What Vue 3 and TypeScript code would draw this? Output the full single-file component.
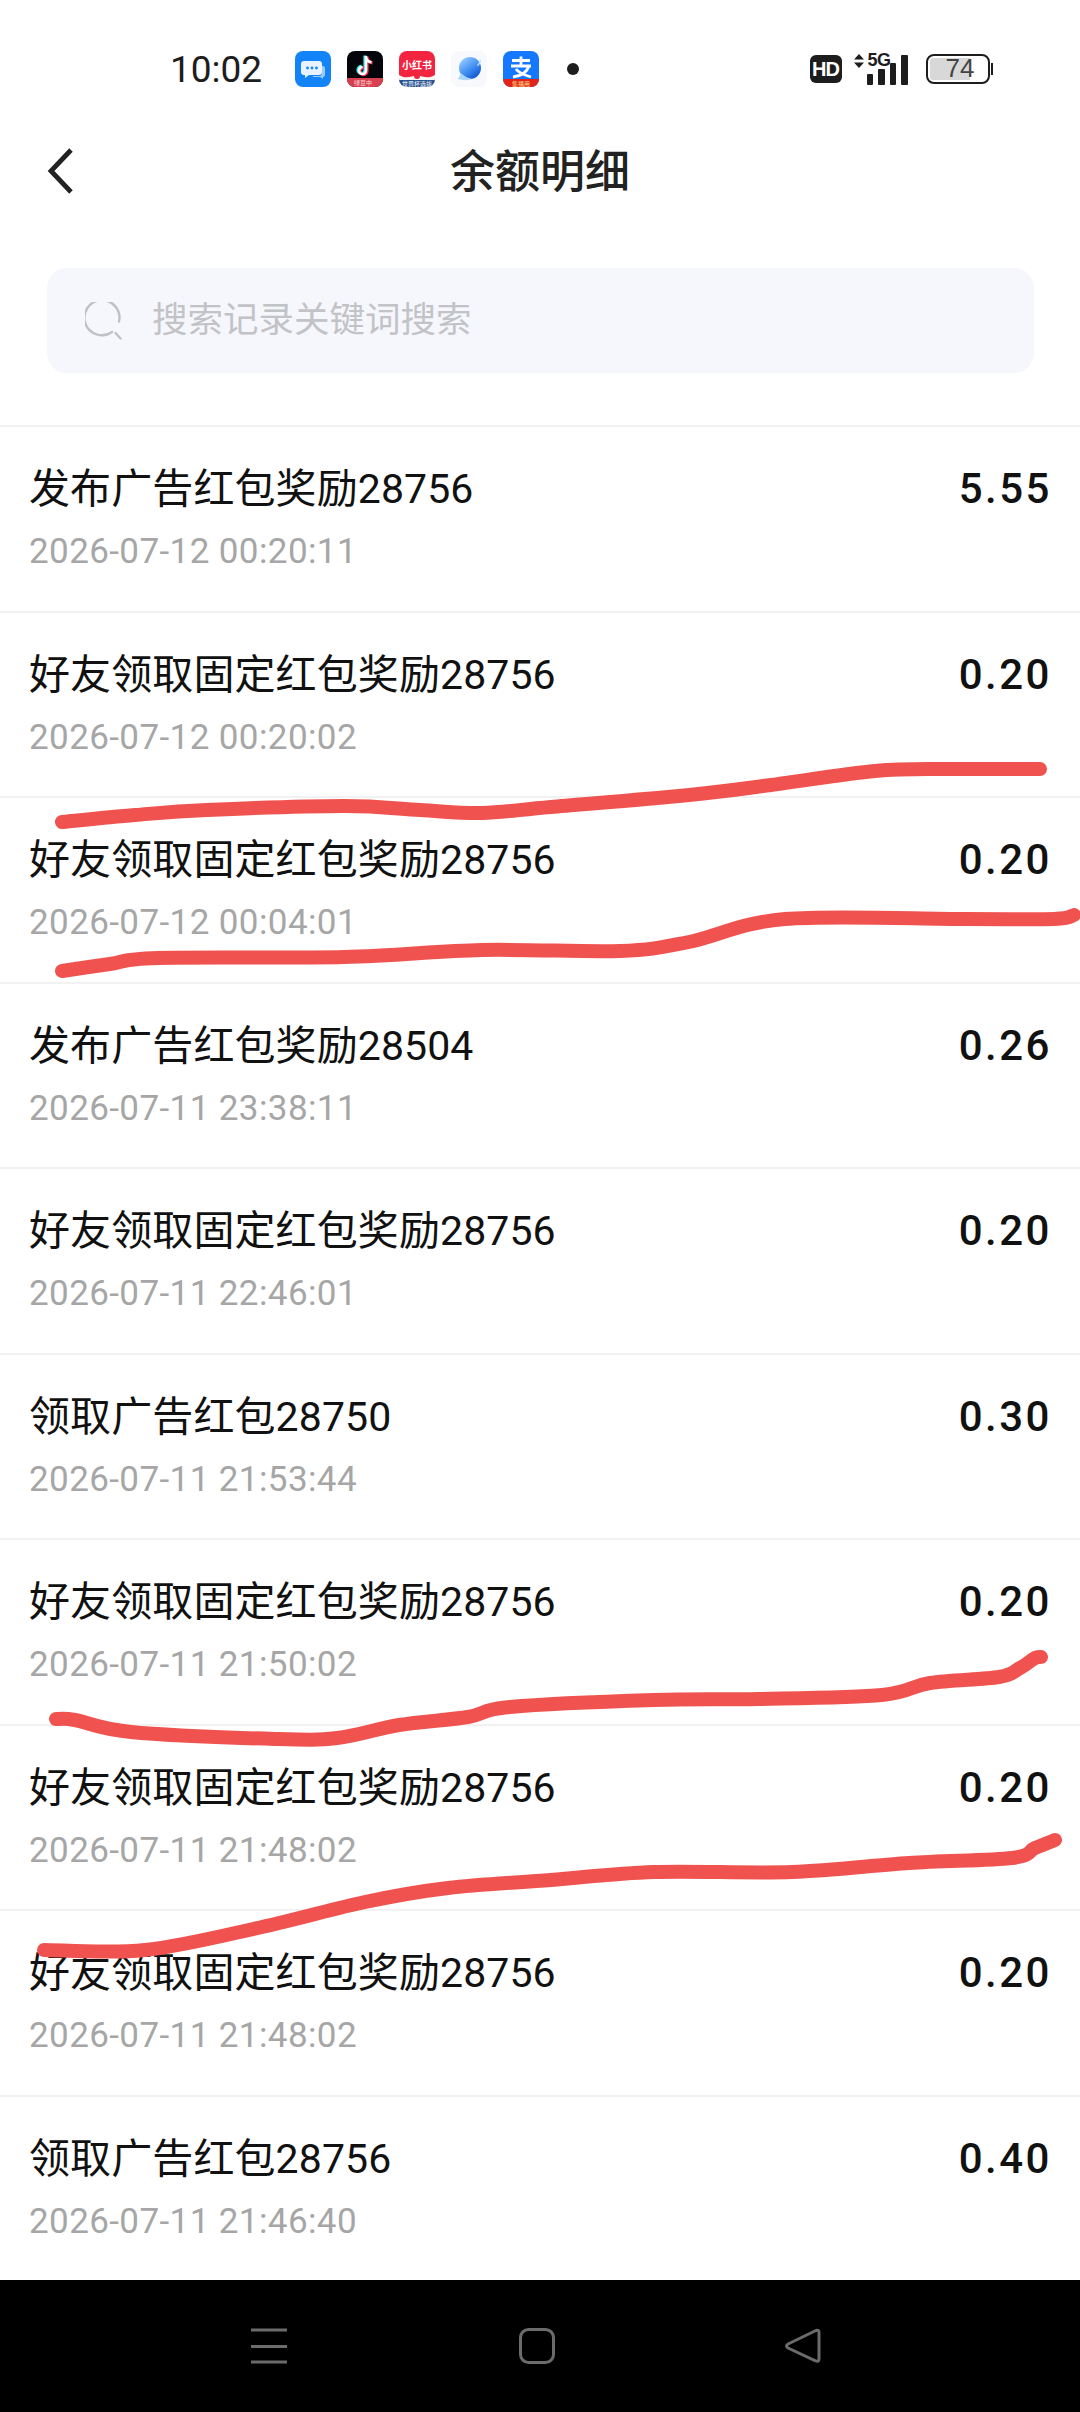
<script setup lang="ts">
interface Row { name: string; code: string; time: string; amount: string }
const rows: Row[] = [
  { name: '发布广告红包奖励', code: '28756', time: '2026-07-12 00:20:11', amount: '5.55' },
  { name: '好友领取固定红包奖励', code: '28756', time: '2026-07-12 00:20:02', amount: '0.20' },
  { name: '好友领取固定红包奖励', code: '28756', time: '2026-07-12 00:04:01', amount: '0.20' },
  { name: '发布广告红包奖励', code: '28504', time: '2026-07-11 23:38:11', amount: '0.26' },
  { name: '好友领取固定红包奖励', code: '28756', time: '2026-07-11 22:46:01', amount: '0.20' },
  { name: '领取广告红包', code: '28750', time: '2026-07-11 21:53:44', amount: '0.30' },
  { name: '好友领取固定红包奖励', code: '28756', time: '2026-07-11 21:50:02', amount: '0.20' },
  { name: '好友领取固定红包奖励', code: '28756', time: '2026-07-11 21:48:02', amount: '0.20' },
  { name: '好友领取固定红包奖励', code: '28756', time: '2026-07-11 21:48:02', amount: '0.20' },
  { name: '领取广告红包', code: '28756', time: '2026-07-11 21:46:40', amount: '0.40' },
]

const strokes: number[][][] = [
  [[62,822],[135,815],[207,810],[344,806],[420,810],[482,813],[551,807],[689,795],[771,785],[875,771],[950,769],[1040,769]],
  [[62,971],[110,964],[158,958],[344,957],[482,950],[620,951],[689,942],[785,919],[964,919],[1054,919],[1074,915]],
  [[56,1719],[75,1720],[131,1732],[275,1739],[337,1738],[399,1725],[468,1717],[510,1707],[654,1700],[758,1699],[882,1695],[930,1683],[999,1677],[1020,1668],[1035,1658],[1041,1657]],
  [[44,1950],[145,1950],[262,1927],[365,1902],[448,1888],[551,1880],[654,1872],[792,1872],[909,1863],[1012,1858],[1035,1848],[1055,1840]],
]

function smooth(p: number[][]): string {
  let d = `M${p[0][0]} ${p[0][1]}`
  for (let i = 0; i < p.length - 1; i++) {
    const a = p[Math.max(i - 1, 0)], b = p[i], c = p[i + 1], e = p[Math.min(i + 2, p.length - 1)]
    const c1x = b[0] + (c[0] - a[0]) / 6, c1y = b[1] + (c[1] - a[1]) / 6
    const c2x = c[0] - (e[0] - b[0]) / 6, c2y = c[1] - (e[1] - b[1]) / 6
    d += ` C${c1x.toFixed(1)} ${c1y.toFixed(1)} ${c2x.toFixed(1)} ${c2y.toFixed(1)} ${c[0]} ${c[1]}`
  }
  return d
}
const paths = strokes.map(smooth)
</script>

<template>
  <div class="page">
    <div class="status">
      <span class="clock">10:02</span>
      <div class="apps">
        <svg class="app" viewBox="0 0 36 36">
          <rect width="36" height="36" rx="8" fill="#1384f7" />
          <path d="M9 10h15a3 3 0 0 1 3 3v8a3 3 0 0 1-3 3h-10l-4 3v-3h-1a3 3 0 0 1-3-3v-8a3 3 0 0 1 3-3z" fill="#e8f3ff" />
          <path d="M27 15h1a2 2 0 0 1 2 2v7a2 2 0 0 1-2 2v2l-3-2h-7v-1h7a3 3 0 0 0 2-3z" fill="#9ccbfb" />
          <circle cx="12.500" cy="17" r="1.400" fill="#1384f7" /><circle cx="17" cy="17" r="1.400" fill="#1384f7" /><circle cx="21.500" cy="17" r="1.400" fill="#1384f7" />
        </svg>
        <svg class="app" viewBox="0 0 36 36">
          <rect width="36" height="36" rx="8" fill="#05060c" />
          <path d="M19 5v14.500a3.500 3.500 0 1 1-3.500-3.500" fill="none" stroke="#25f4ee" stroke-width="3.200" transform="translate(-1 -.6)" />
          <path d="M19 5v14.500a3.500 3.500 0 1 1-3.500-3.500M19 6c.5 3 2.500 5 5.500 5.300" fill="none" stroke="#fe2c55" stroke-width="3.200" transform="translate(1 .6)" />
          <path d="M19 5v14.500a3.500 3.500 0 1 1-3.500-3.500M19 6c.5 3 2.500 5 5.500 5.300" fill="none" stroke="#fff" stroke-width="2.600" />
          <path d="M0 27h36v1a8 8 0 0 1-8 8H8a8 8 0 0 1-8-8z" fill="#d8404f" />
          <text x="16" y="34" class="tiny" fill="#ffd9d9">绿豆中</text>
        </svg>
        <svg class="app" viewBox="0 0 36 36">
          <rect width="36" height="36" rx="8" fill="#f3243f" />
          <path d="M0 24c6 4 12 2 18 0 6 2 12 4 18 0v4a8 8 0 0 1-8 8H8a8 8 0 0 1-8-8z" fill="#f6f6f6" />
          <path d="M0 29h36v-1 0a8 8 0 0 1-8 8H8a8 8 0 0 1-8-8z" fill="#26528f" />
          <circle cx="18" cy="25" r="3" fill="#f3243f" />
          <text x="18" y="18" class="xhs" fill="#fff">小红书</text>
          <text x="18" y="34.500" class="tiny" fill="#fff">世界杯选拔</text>
        </svg>
        <svg class="app" viewBox="0 0 36 36">
          <rect width="36" height="36" rx="8" fill="#f7f9fd" />
          <defs>
            <linearGradient id="planet" x1="0.200" y1="0.100" x2="0.800" y2="0.900">
              <stop offset="0" stop-color="#8fc4ff" /><stop offset="0.550" stop-color="#3f8ff2" /><stop offset="1" stop-color="#1359d0" />
            </linearGradient>
          </defs>
          <circle cx="19" cy="17" r="11" fill="url(#planet)" />
          <path d="M7 28c1-2 2-4 3.500-5.500 3 3 7 5 11 5.500-4 1.500-10 1.500-14.500 0z" fill="#a8d6fb" />
          <path d="M29 9c1 1-1 4-2.500 5.500" fill="none" stroke="#bcdcff" stroke-width="1.500" />
        </svg>
        <svg class="app" viewBox="0 0 36 36">
          <rect width="36" height="36" rx="8" fill="#1677ff" />
          <path d="M0 28h36a8 8 0 0 1-8 8H8a8 8 0 0 1-8-8z" fill="#e2231a" />
          <path d="M9 9.500h18M18 5.500v8M8 15h20M26 15c-2 6-8 10-16 11M13 18c2 3 8 6 15 8" fill="none" stroke="#fff" stroke-width="2.800" />
          <text x="18" y="34.500" class="tiny" fill="#ffe08a">集福用</text>
        </svg>
      </div>
      <i class="dot"></i>
      <span class="spacer"></span>
      <span class="hd">HD</span>
      <svg class="arrows" viewBox="0 0 10 14"><path d="M5 0l5 5.500H0zM5 14l5-5.500H0z" fill="#1d1d1d" /></svg>
      <div class="signal">
        <span class="five">5G</span>
        <i class="bar b1"></i><i class="bar b2"></i><i class="bar b3"></i><i class="bar b4"></i>
      </div>
      <div class="battery">
        <div class="cell"><span class="cell-fill"></span><span class="level">74</span></div>
        <i class="nub"></i>
      </div>
    </div>

    <header class="head">
      <svg class="back" viewBox="0 0 28 48"><path d="M25 3L5 24l20 21" fill="none" stroke="#222" stroke-width="4.800" /></svg>
      <h1 class="title">余额明细</h1>
    </header>

    <div class="search">
      <svg class="lens" viewBox="0 0 38 38">
        <path d="M27 32.500A17.500 17.500 0 1 1 34 22" fill="none" stroke="#c0c1c5" stroke-width="2.400" stroke-linecap="round" transform="translate(0 -2.500)" />
        <path d="M30.500 31l5 5.500" fill="none" stroke="#c0c1c5" stroke-width="2.400" stroke-linecap="round" />
      </svg>
      <span class="hint">搜索记录关键词搜索</span>
    </div>

    <ul class="list">
      <li v-for="(r, i) in rows" :key="i" class="row">
        <div class="row-top">
          <span class="name">{{ r.name }}{{ r.code }}</span>
          <span class="amount">{{ r.amount }}</span>
        </div>
        <span class="time">{{ r.time }}</span>
      </li>
    </ul>

    <nav class="nav">
      <svg class="nav-ico menu" viewBox="0 0 36 36"><path d="M0 2h36M0 18.500h36M0 34h36" stroke="#6b6b6b" stroke-width="3.200" /></svg>
      <svg class="nav-ico home" viewBox="0 0 36 36"><rect x="1.500" y="1.500" width="33" height="33" rx="8" fill="none" stroke="#6b6b6b" stroke-width="3" /></svg>
      <svg class="nav-ico tri" viewBox="0 0 36 36"><path d="M31 2.500c2 -.8 3 .2 3 2v26.500c0 2-1.500 3-3.500 1.800L3 20c-2-1.200-2-2.800 0-4z" fill="none" stroke="#6b6b6b" stroke-width="3" stroke-linejoin="round" /></svg>
    </nav>

    <svg class="marks" viewBox="0 0 1080 2412">
      <path v-for="(d, i) in paths" :key="i" :d="d" fill="none" stroke="#f0534f" stroke-width="14" stroke-linecap="round" stroke-linejoin="round" />
    </svg>
  </div>
</template>

<style scoped>
.page {
  position: relative;
  width: 1080px;
  height: 2412px;
  background: #fff;
  overflow: hidden;
  display: flex;
  flex-direction: column;
  font-family: Roboto, "Noto Sans CJK SC", sans-serif;
}
.status {
  height: 138px;
  flex: none;
  display: flex;
  align-items: center;
  padding: 0 87px 0 170px;
  box-sizing: border-box;
  margin-bottom: -8px;
}
.clock { width: 125px; font-size: 37px; color: #1d1d1d; line-height: 1; }
.apps { display: flex; gap: 16px; }
.app { width: 36px; height: 36px; display: block; }
.tiny { font-size: 6px; text-anchor: middle; font-family: "Noto Sans CJK SC", sans-serif; }
.xhs { font-size: 10px; font-weight: 700; text-anchor: middle; font-family: "Noto Sans CJK SC", sans-serif; }
.dot { width: 12px; height: 12px; border-radius: 50%; background: #1d1d1d; margin-left: 28px; }
.spacer { flex: 1; }
.hd {
  width: 32px; height: 28px; border-radius: 6px; background: #1d1d1d; color: #fff;
  font: 700 20px/28px "Liberation Sans", sans-serif; text-align: center; letter-spacing: -1px;
}
.arrows { width: 10px; height: 14px; margin: -16px 3px 0 12px; }
.signal { position: relative; width: 42px; height: 32px; display: flex; align-items: flex-end; gap: 5px; }
.five {
  position: absolute; left: 1px; top: -3px;
  font: 700 18px/20px "Liberation Sans", sans-serif; letter-spacing: -.5px; color: #1d1d1d;
}
.bar { width: 6.500px; background: #1d1d1d; border-radius: 1px; flex: none; }
.b1 { height: 11px; } .b2 { height: 16px; } .b3 { height: 22px; } .b4 { height: 30px; }
.battery { display: flex; align-items: center; margin-left: 17px; }
.cell {
  position: relative; width: 64px; height: 30px; box-sizing: border-box;
  border: 2.500px solid #1d1d1d; border-radius: 8px;
}
.cell-fill { position: absolute; left: 2px; top: 2px; bottom: 2px; width: 40px; background: #d8d8d8; border-radius: 3px 0 0 3px; }
.level {
  position: absolute; left: 18px; top: 0; font: 26px/25px "Liberation Sans", sans-serif; color: #444; 
}
.nub { width: 2.500px; height: 12px; background: #1d1d1d; margin-left: 1px; }

.head {
  position: relative; height: 84px; flex: none;
  display: flex; align-items: center; justify-content: center;
}
.back { position: absolute; left: 46px; top: 17px; width: 28px; height: 48px; }
.title { margin: 0 0 0 0; font-size: 45px; font-weight: 500; color: #222; line-height: 1; }

.search {
  flex: none; height: 105px; margin: 54px 46px 52px 47px; box-sizing: border-box;
  background: #f6f7fd; border-radius: 20px;
  display: flex; align-items: center; padding-left: 38px; gap: 29px;
}
.lens { width: 38px; height: 38px; flex: none; }
.hint { font-size: 35.500px; letter-spacing: 0; color: #c2c3c7; line-height: 1; }

.list {
  list-style: none; margin: 0; padding: 0; flex: 1; min-height: 0;
  border-top: 2px solid #f2f2f3;
}
.row {
  height: 185.500px; box-sizing: border-box; padding: 37px 30px 0 29px;
  border-bottom: 2px solid #f2f2f3;
  display: flex; flex-direction: column;
}
.row:last-child { border-bottom: none; }
.row-top { display: flex; justify-content: space-between; align-items: center; height: 50px; }
.name { font-size: 41px; color: #111; line-height: 50px; letter-spacing: .1px; }
.amount { font-size: 42px; font-weight: 500; color: #111; line-height: 50px; letter-spacing: 2.500px; margin-right: -2px; }
.time { margin-top: 18px; font-size: 35px; line-height: 40px; color: #a6a6a6; letter-spacing: .4px; }

.nav {
  position: relative; flex: none; height: 132px; background: #000;
}
.nav-ico { position: absolute; top: 48px; width: 36px; height: 36px; }
.menu { left: 251px; }
.home { left: 519px; }
.tri { left: 785px; }

.marks { position: absolute; left: 0; top: 0; width: 1080px; height: 2412px; pointer-events: none; }
</style>
